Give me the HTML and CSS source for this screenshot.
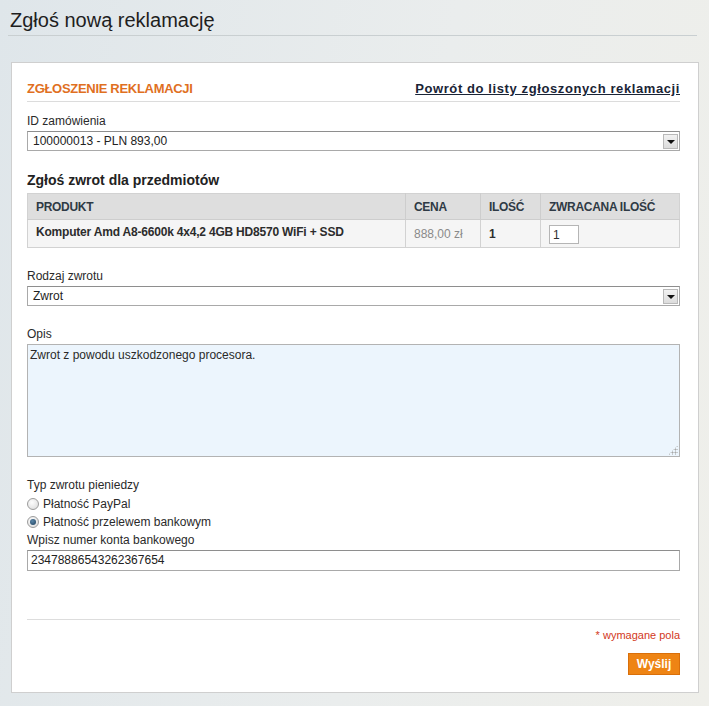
FILE: index.html
```html
<!DOCTYPE html>
<html lang="pl">
<head>
<meta charset="utf-8">
<title>Zgłoś nową reklamację</title>
<link rel="stylesheet" href="styles.css">
</head>
<body>
<div class="page">
  <h1 class="page-title">Zgłoś nową reklamację</h1>
  <div class="panel">
    <div class="panel-head">
      <h2 class="panel-title">ZGŁOSZENIE REKLAMACJI</h2>
      <a class="back-link" href="#">Powrót do listy zgłoszonych reklamacji</a>
    </div>

    <div class="field f-order">
      <label class="lbl">ID zamówienia</label>
      <div class="select"><span>100000013 - PLN 893,00</span><span class="arrow"></span></div>
    </div>

    <h3 class="sub-title">Zgłoś zwrot dla przedmiotów</h3>
    <table class="items">
      <thead>
        <tr><th class="c-prod">PRODUKT</th><th class="c-price">CENA</th><th class="c-qty">ILOŚĆ</th><th class="c-ret">ZWRACANA ILOŚĆ</th></tr>
      </thead>
      <tbody>
        <tr><td class="c-prod name">Komputer Amd A8-6600k 4x4,2 4GB HD8570 WiFi + SSD</td><td class="c-price price">888,00 zł</td><td class="c-qty qty">1</td><td class="c-ret"><span class="qty-input">1</span></td></tr>
      </tbody>
    </table>

    <div class="field f-type">
      <label class="lbl">Rodzaj zwrotu</label>
      <div class="select"><span>Zwrot</span><span class="arrow"></span></div>
    </div>

    <div class="field f-desc">
      <label class="lbl">Opis</label>
      <div class="textarea">Zwrot z powodu uszkodzonego procesora.<span class="grip"></span></div>
    </div>

    <div class="field f-refund">
      <label class="lbl">Typ zwrotu pieniedzy</label>
      <div class="radio-row first"><span class="radio"></span>Płatność PayPal</div>
      <div class="radio-row"><span class="radio on"></span>Płatność przelewem bankowym</div>
      <label class="lbl lbl-tight">Wpisz numer konta bankowego</label>
      <div class="input">23478886543262367654</div>
    </div>

    <div class="panel-foot">
      <p class="required">* wymagane pola</p>
      <div class="actions"><button class="btn">Wyślij</button></div>
    </div>
  </div>
</div>
</body>
</html>
```
FILE: styles.css
```css
* { box-sizing: border-box; }
html, body { margin: 0; padding: 0; }
body {
  width: 709px;
  height: 706px;
  overflow: hidden;
  font-family: "Liberation Sans", Arial, sans-serif;
  font-size: 12px;
  color: #2f2f2f;
  background: linear-gradient(100deg, #dfe6ea 0%, #eaeded 55%, #efefea 100%);
}
.page { padding: 0 10px 0 8px; }
.page-title {
  margin: 0;
  padding: 10px 0 4px 2px;
  font-size: 20px;
  font-weight: normal;
  color: #1e1e1e;
  line-height: 21px;
  border-bottom: 1px solid #c9cfd1;
  width: 689px;
}
.panel {
  margin: 26px 0 0 3px;
  width: 688px;
  height: 631px;
  background: #fff;
  border: 1px solid #cfcfcf;
  padding: 14px 18px 0 15px;
}
.panel-head {
  display: flex;
  justify-content: space-between;
  align-items: flex-end;
  border-bottom: 1px solid #dcdcdc;
  padding-bottom: 4px;
  height: 25px;
}
.panel-title {
  margin: 0;
  font-size: 13px;
  font-weight: bold;
  color: #e0701f;
  line-height: 16px;
  letter-spacing: -0.3px;
}
.back-link {
  font-size: 13px;
  font-weight: bold;
  color: #1a2436;
  line-height: 16px;
  text-decoration: underline;
  letter-spacing: 0.6px;
}
.field { display: flex; flex-direction: column; }
.lbl { display: block; line-height: 16px; color: #2a2a2a; }
.f-order { margin-top: 11px; }
.select {
  margin-top: 2px;
  height: 20px;
  border: 1px solid #a9a9a9;
  border-top-color: #8e8e8e;
  display: flex;
  align-items: center;
  justify-content: space-between;
  padding: 0 1px 0 5px;
  color: #222;
  background: #fff;
}
.arrow {
  width: 15px;
  height: 15px;
  background: linear-gradient(#f2f2f2, #dcdcdc);
  border: 1px solid #b9b9b9;
  position: relative;
}
.arrow::after {
  content: "";
  position: absolute;
  left: 3px;
  top: 5px;
  border-left: 4px solid transparent;
  border-right: 4px solid transparent;
  border-top: 4px solid #111;
}
.sub-title {
  margin: 21px 0 0;
  font-size: 14px;
  font-weight: bold;
  color: #222;
  line-height: 16px;
}
.items {
  margin-top: 5px;
  width: 653px;
  border-collapse: collapse;
  border: 1px solid #d2d2d2;
}
.items th {
  background: #dedede;
  height: 26px;
  text-align: left;
  font-weight: bold;
  color: #2f3a45;
  padding: 0 8px;
  border-left: 1px solid #cdcdcd;
  letter-spacing: -0.3px;
}
.items td {
  background: #f5f5f5;
  height: 28px;
  padding: 0 8px;
  border-left: 1px solid #d2d2d2;
  border-top: 1px solid #cdcdcd;
  vertical-align: middle;
}
.items th:first-child, .items td:first-child { border-left: none; }
.c-prod { width: 378px; }
.c-price { width: 75px; }
.c-qty { width: 60px; }
.name { font-weight: bold; color: #2c2c2c; letter-spacing: -0.2px; padding-bottom: 4px !important; }
.price { color: #8a8a8a; }
.qty { font-weight: bold; }
.qty-input {
  display: inline-block;
  width: 30px;
  height: 19px;
  border: 1px solid #b5b5b5;
  background: #fff;
  padding: 2px 3px;
  line-height: 14px;
  margin-top: 1px;
}
.f-type { margin-top: 20px; }
.f-desc { margin-top: 20px; }
.textarea {
  margin-top: 2px;
  height: 113px;
  border: 1px solid #b3b3b3;
  background: #ecf5fd;
  padding: 3px 2px;
  line-height: 14px;
  color: #2a2a2a;
  position: relative;
}
.grip {
  position: absolute;
  right: 1px;
  bottom: 1px;
  width: 10px;
  height: 10px;
  background:
    radial-gradient(circle, #a8a8a8 45%, transparent 50%) 0 0 / 3px 3px;
  clip-path: polygon(100% 0, 100% 100%, 0 100%);
}
.f-refund { margin-top: 20px; }
.radio-row { display: flex; align-items: center; height: 18px; color: #2a2a2a; }
.radio-row.first { margin-top: 2px; }
.radio {
  width: 12px;
  height: 12px;
  border-radius: 50%;
  border: 1px solid #9c9c9c;
  background: radial-gradient(circle at 40% 35%, #fdfdfd, #d8d8d8);
  margin-right: 4px;
  position: relative;
}
.radio.on::after {
  content: "";
  position: absolute;
  left: 2px;
  top: 2px;
  width: 6px;
  height: 6px;
  border-radius: 50%;
  background: radial-gradient(circle at 40% 35%, #5a86a8, #1d3f5c);
}
.lbl-tight { margin-top: 1px; }
.input {
  margin-top: 2px;
  height: 21px;
  border: 1px solid #a9a9a9;
  border-top-color: #8e8e8e;
  padding: 0 3px;
  line-height: 19px;
  color: #222;
}
.panel-foot {
  margin-top: 48px;
  border-top: 1px solid #dddddd;
}
.required {
  margin: 8px 0 0;
  text-align: right;
  color: #d2381c;
  font-size: 11px;
  line-height: 14px;
}
.actions { display: flex; justify-content: flex-end; margin-top: 11px; }
.btn {
  background: #ee8414;
  border: 1px solid #d96f0a;
  color: #fff;
  font-family: "Liberation Sans", Arial, sans-serif;
  font-weight: bold;
  font-size: 12px;
  height: 22px;
  width: 52px;
  padding: 0;
}
```
